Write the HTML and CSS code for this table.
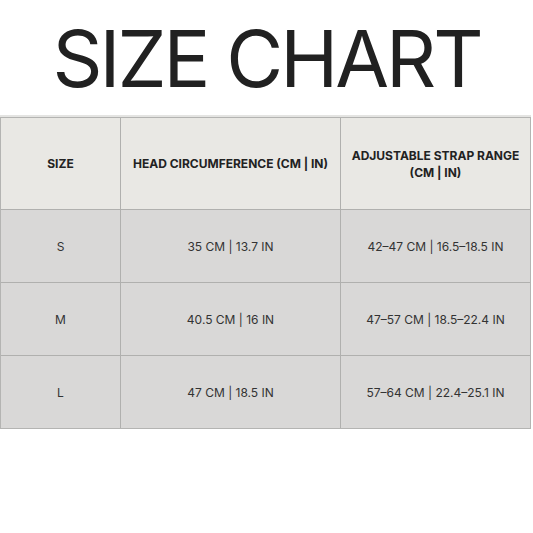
FILE: index.html
```html
<!DOCTYPE html>
<html>
<head>
<meta charset="utf-8">
<link rel="stylesheet" href="styles.css">
</head>
<body>
<h1 class="title">SIZE CHART</h1>
<div class="chart">
  <div class="row head">
    <div class="cell">SIZE</div>
    <div class="cell">HEAD CIRCUMFERENCE (CM | IN)</div>
    <div class="cell">ADJUSTABLE STRAP RANGE<br>(CM | IN)</div>
  </div>
  <div class="row">
    <div class="cell">S</div>
    <div class="cell">35 CM | 13.7 IN</div>
    <div class="cell">42–47 CM | 16.5–18.5 IN</div>
  </div>
  <div class="row">
    <div class="cell">M</div>
    <div class="cell">40.5 CM | 16 IN</div>
    <div class="cell">47–57 CM | 18.5–22.4 IN</div>
  </div>
  <div class="row">
    <div class="cell">L</div>
    <div class="cell">47 CM | 18.5 IN</div>
    <div class="cell">57–64 CM | 22.4–25.1 IN</div>
  </div>
</div>
</body>
</html>
```
FILE: styles.css
```css
html, body {
  margin: 0;
  padding: 0;
  background: #ffffff;
}
body {
  font-family: Inter, "Noto Sans", sans-serif;
  color: #222;
}
.title {
  margin: 0;
  padding-top: 20px;
  height: 115px;
  box-sizing: border-box;
  text-align: center;
  font-weight: 400;
  font-size: 78px;
  line-height: 1;
  color: #212121;
  letter-spacing: -3px;
}
.chart {
  margin-top: 2px;
  width: 531px;
  border: 1px solid #b4b4b2;
  box-shadow: 0 -2px 0 #e4e4e2, 0 2px 0 #e4e4e2;
  box-sizing: border-box;
}
.row {
  display: grid;
  grid-template-columns: 119px 220px 1fr;
  height: 73px;
  box-sizing: border-box;
  background: #d9d8d7;
  border-top: 1px solid #b0b0ae;
}
.row.head {
  height: 91px;
  background: #e9e8e4;
  border-top: none;
}
.cell {
  display: flex;
  align-items: center;
  justify-content: center;
  text-align: center;
  font-size: 12px;
  line-height: 17px;
  color: #333;
  border-left: 1px solid #b0b0ae;
}
.cell:first-child {
  border-left: none;
}
.head .cell {
  font-weight: 700;
  font-size: 12px;
  color: #222;
}
```
